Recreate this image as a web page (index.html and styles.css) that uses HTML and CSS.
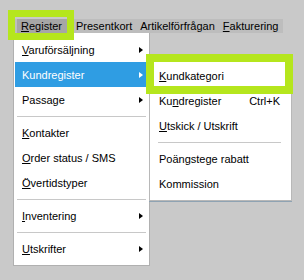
FILE: index.html
```html
<!DOCTYPE html>
<html lang="sv">
<head>
    <meta charset="UTF-8">
    <title>Register-meny</title>
    <link rel="stylesheet" href="styles.css">
</head>
<body>
    <div class="screen">
        <!-- Menyrad -->
        <div class="menubar">
            <span class="bar-item active"><u>R</u>egister</span>
            <span class="bar-item">Presentkort</span>
            <span class="bar-item">Artikelförfrågan</span>
            <span class="bar-item"><u>F</u>akturering</span>
        </div>

        <!-- Register-menyn -->
        <div class="dropdown">
            <div class="item"><span><u>V</u>aruförsäljning</span><span class="arrow"></span></div>
            <div class="item selected"><span>Kundregister</span><span class="arrow"></span></div>
            <div class="item"><span>Passage</span><span class="arrow"></span></div>
            <div class="sep"></div>
            <div class="item"><span><u>K</u>ontakter</span></div>
            <div class="item"><span><u>O</u>rder status / SMS</span></div>
            <div class="item"><span><u>Ö</u>vertidstyper</span></div>
            <div class="sep"></div>
            <div class="item"><span><u>I</u>nventering</span><span class="arrow"></span></div>
            <div class="sep"></div>
            <div class="item"><span><u>U</u>tskrifter</span><span class="arrow"></span></div>
        </div>

        <!-- Undermeny Kundregister -->
        <div class="submenu">
            <div class="item"><span><u>K</u>undkategori</span></div>
            <div class="item"><span>Ku<u>n</u>dregister</span><span class="shortcut">Ctrl+K</span></div>
            <div class="item"><span><u>U</u>tskick / Utskrift</span></div>
            <div class="sep"></div>
            <div class="item"><span>Poängstege rabatt</span></div>
            <div class="item"><span>Kommission</span></div>
        </div>

        <!-- Markeringar -->
        <div class="mark mark-register"></div>
        <div class="mark mark-kategori"></div>
    </div>
</body>
</html>
```

FILE: styles.css
```css
/* General */
body {
    margin: 0;
    background: #c9c9c9;
    font-family: 'Liberation Sans', Arial, sans-serif;
    font-size: 11px;
    color: #000;
}

u {
    text-decoration-thickness: 1px;
    text-underline-offset: 1px;
}

.screen {
    position: relative;
    width: 304px;
    height: 280px;
    overflow: hidden;
    padding-top: 19px;
    box-sizing: border-box;
}

/* Menu bar */
.menubar {
    display: flex;
    align-items: center;
    margin-left: 13px;
    width: 270px;
    height: 14px;
    background: #bdbdbd;
}

.bar-item {
    padding: 0 4px;
    line-height: 14px;
    white-space: nowrap;
}

.bar-item.active {
    margin-left: 4px;
    padding: 0 7px 0 4px;
    margin-right: 3px;
    background: #a6a6a6;
}

/* Dropdown */
.dropdown {
    position: absolute;
    left: 13px;
    top: 33px;
    width: 137px;
    height: 233px;
    box-sizing: border-box;
    background: #fff;
    border: 1px solid #b0b0b0;
    border-top: none;
    padding: 4px 3px 4px 1px;
}

.item {
    display: flex;
    align-items: center;
    justify-content: space-between;
    height: 25px;
    padding: 0 3px 0 7px;
    white-space: nowrap;
}

.item.selected {
    background: #2f9de3;
    color: #fff;
}

.arrow {
    width: 0;
    height: 0;
    border-top: 3.5px solid transparent;
    border-bottom: 3.5px solid transparent;
    border-left: 4px solid #000;
}

.item.selected .arrow {
    border-left-color: #fff;
}

.sep {
    height: 8px;
    margin: 0 0 0 2px;
    display: flex;
    align-items: center;
}

.sep::before {
    content: "";
    flex: 1;
    height: 1px;
    background: #c8c8c8;
}

/* Submenu */
.submenu {
    position: absolute;
    left: 149px;
    top: 57px;
    width: 143px;
    height: 144px;
    box-sizing: border-box;
    background: #fff;
    border: 1px solid #b8b8b8;
    box-shadow: 0 1px 0 #8fa3b3;
    padding: 5px 10px 5px 0;
}

.submenu .item {
    padding: 0 0 0 9px;
}

.submenu .sep {
    margin: 0 0 0 8px;
}

.shortcut {
    margin-right: 1px;
}

/* Highlight frames */
.mark {
    position: absolute;
    box-sizing: border-box;
    border: 7px solid #b5e61d;
}

.mark-register {
    left: 8px;
    top: 10px;
    width: 66px;
    height: 30px;
}

.mark-kategori {
    left: 146px;
    top: 54px;
    width: 147px;
    height: 40px;
    border-width: 8px;
}
```
